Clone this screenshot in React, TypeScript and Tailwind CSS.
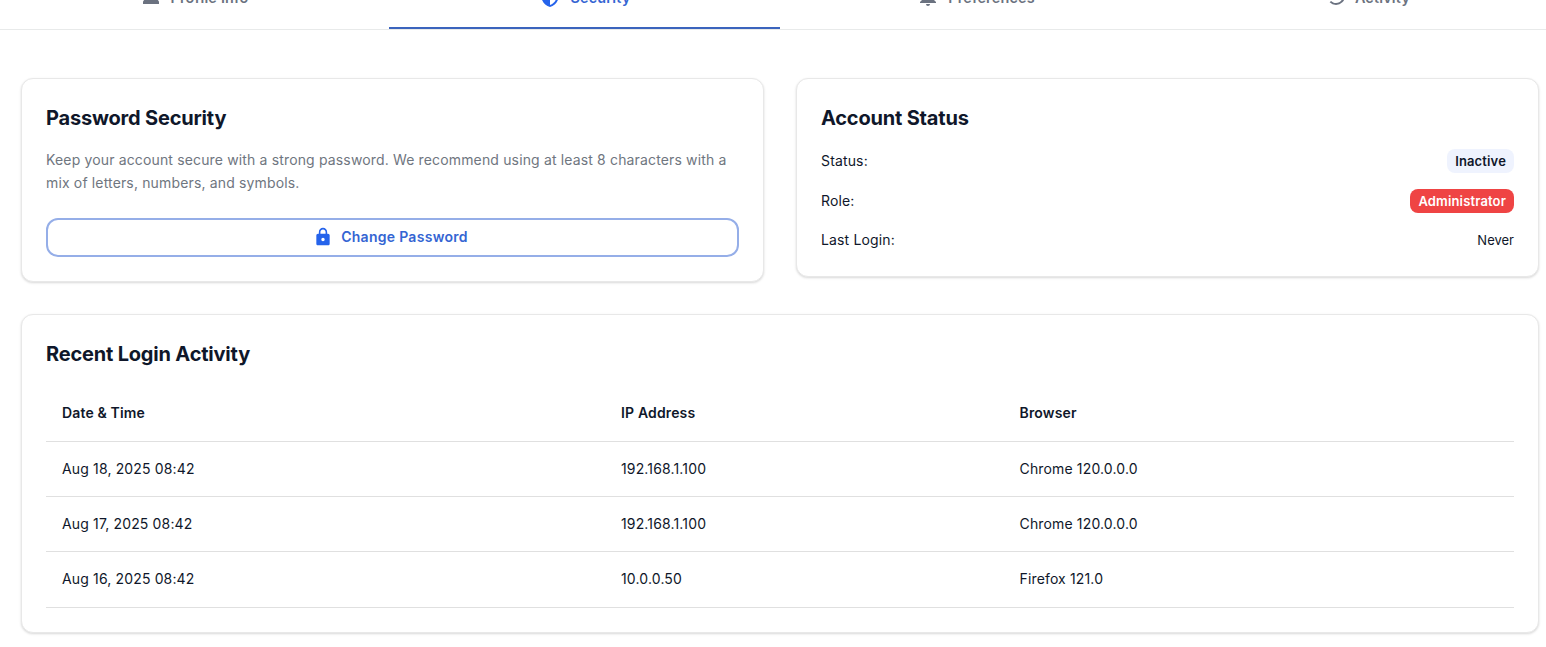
import type { ReactNode } from "react";
import { MdHistory, MdLock, MdNotifications, MdPerson, MdSecurity } from "react-icons/md";

const tabs = [
  { label: "Profile Info", icon: MdPerson, active: false },
  { label: "Security", icon: MdSecurity, active: true },
  { label: "Preferences", icon: MdNotifications, active: false },
  { label: "Activity", icon: MdHistory, active: false },
];

const logins = [
  { date: "Aug 18, 2025 08:42", ip: "192.168.1.100", browser: "Chrome 120.0.0.0" },
  { date: "Aug 17, 2025 08:42", ip: "192.168.1.100", browser: "Chrome 120.0.0.0" },
  { date: "Aug 16, 2025 08:42", ip: "10.0.0.50", browser: "Firefox 121.0" },
];

function Card({ title, className, children }: { title: string; className: string; children: ReactNode }) {
  return (
    <section
      className={`rounded-xl border border-[#e8e8e8] bg-white px-6 shadow-[0_1px_3px_rgba(0,0,0,0.1),0_1px_2px_rgba(0,0,0,0.06)] ${className}`}
    >
      <h2 className="pt-6 text-xl leading-[30px] font-bold tracking-[-0.19px] text-[#0f172a]">{title}</h2>
      {children}
    </section>
  );
}

export default function App() {
  return (
    <div className="h-[647px] w-[1546px] overflow-hidden bg-white font-['Inter',sans-serif] text-sm tracking-[0.15px] text-[#0f172a]">
      <nav className="flex h-[30px] items-end border-b border-[#e8eaea]">
        {tabs.map(({ label, icon: Icon, active }, i) => (
          <div
            key={label}
            className={`flex h-16 w-[391px] shrink-0 items-center justify-center gap-2 border-b-2 text-[14.4px] font-semibold tracking-[0.2px] ${i === 0 ? "-ml-0.5" : ""} ${active ? "border-[#3b64bd] text-[#3465d3]" : "border-transparent text-[#6b7280]"}`}
          >
            <Icon className={active ? "size-6 text-[#2563eb]" : "size-6"} />
            <span className="pt-1">{label}</span>
          </div>
        ))}
      </nav>

      <main className="flex flex-col gap-8 pt-12 pr-[7px] pl-[21px]">
        <div className="grid grid-cols-2 items-start gap-8">
          <Card title="Password Security" className="h-[204px]">
            <p className="mt-[15px] leading-[23px] text-[#6f7680]">
              Keep your account secure with a strong password. We recommend using at least 8 characters with a mix of
              letters, numbers, and symbols.
            </p>
            <button className="mt-6 flex h-[39px] w-full items-center justify-center gap-2 rounded-xl border-2 border-[#95aee8] pr-1 pb-0.5 font-semibold tracking-[0.28px] text-[#3465d3]">
              <MdLock className="size-5 text-[#2563eb]" />
              Change Password
            </button>
          </Card>

          <Card title="Account Status" className="h-[199px]">
            <dl className="mt-4 flex flex-col gap-4">
              <div className="flex h-6 items-center justify-between">
                <dt>Status:</dt>
                <dd className="flex h-6 items-center rounded-lg bg-[#eff3fe] px-2 text-[13px] font-semibold">Inactive</dd>
              </div>
              <div className="flex h-6 items-center justify-between">
                <dt>Role:</dt>
                <dd className="flex h-6 items-center rounded-lg bg-[#ef4444] px-2 text-[13px] font-semibold text-white">
                  Administrator
                </dd>
              </div>
              <div className="flex h-[22px] items-center justify-between">
                <dt>Last Login:</dt>
                <dd className="text-[13px] tracking-normal">Never</dd>
              </div>
            </dl>
          </Card>
        </div>

        <Card title="Recent Login Activity" className="h-[319px]">
          <table className="mt-4 w-full table-fixed border-collapse text-left">
            <colgroup>
              <col className="w-[559px]" />
              <col className="w-[398.5px]" />
              <col />
            </colgroup>
            <thead>
              <tr className="h-[56px] border-b border-[#e0e0e0]">
                <th className="px-4 font-semibold">Date &amp; Time</th>
                <th className="px-4 font-semibold">IP Address</th>
                <th className="px-4 font-semibold">Browser</th>
              </tr>
            </thead>
            <tbody>
              {logins.map((row) => (
                <tr key={row.date} className="h-[55px] border-b border-[#e0e0e0] last:h-[56px]">
                  <td className="px-4">{row.date}</td>
                  <td className="px-4">{row.ip}</td>
                  <td className="px-4">{row.browser}</td>
                </tr>
              ))}
            </tbody>
          </table>
        </Card>
      </main>
    </div>
  );
}
